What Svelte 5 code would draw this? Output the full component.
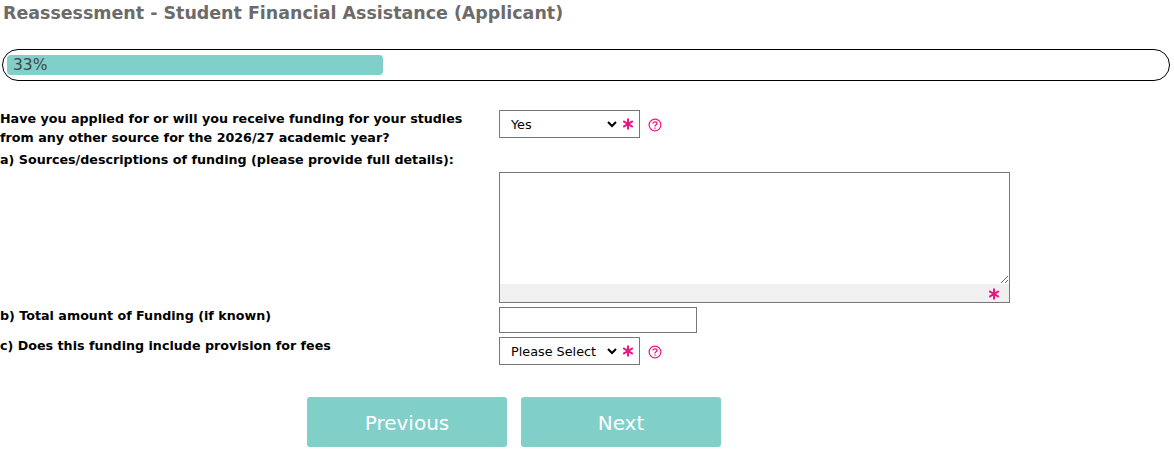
<script>
  let funding = $state('Yes');
  let fees = $state('Please Select');
</script>

<main class="page">
  <h1>Reassessment - Student Financial Assistance (Applicant)</h1>

  <div class="progress"><div class="fill" style="width: 376px">33%</div></div>

  <form class="form">
    <div class="row row-1">
      <div class="label">Have you applied for or will you receive funding for your studies<br />from any other source for the 2026/27 academic year?</div>
      <div class="field">
        <div class="selectbox">
          <select bind:value={funding}><option>Yes</option><option>No</option></select>
          <span class="req">
            <svg viewBox="0 0 12 12" width="12" height="12"><path d="M6 0.5V11.5M1.2 3.2L10.8 8.8M10.8 3.2L1.2 8.8" /></svg>
          </span>
        </div>
        <svg class="help" viewBox="0 0 14 14" width="14" height="14"><circle cx="7" cy="7" r="5.9" /><path d="M5 5.6C5 4.4 5.9 3.8 7 3.8S9 4.5 9 5.5C9 6.8 7 6.9 7 8.4" /><path d="M7 9.6V10.8" /></svg>
      </div>
    </div>

    <div class="label row-a">a) Sources/descriptions of funding (please provide full details):</div>

    <div class="row row-ta">
      <div class="label"></div>
      <div class="areabox">
        <textarea></textarea>
        <div class="areafoot">
          <svg viewBox="0 0 12 12" width="12" height="12"><path d="M6 0.5V11.5M1.2 3.2L10.8 8.8M10.8 3.2L1.2 8.8" /></svg>
        </div>
      </div>
    </div>

    <div class="row row-b">
      <div class="label">b) Total amount of Funding (if known)</div>
      <input type="text" />
    </div>

    <div class="row row-c">
      <div class="label">c) Does this funding include provision for fees</div>
      <div class="field">
        <div class="selectbox">
          <select bind:value={fees}><option>Please Select</option><option>Yes</option><option>No</option></select>
          <span class="req">
            <svg viewBox="0 0 12 12" width="12" height="12"><path d="M6 0.5V11.5M1.2 3.2L10.8 8.8M10.8 3.2L1.2 8.8" /></svg>
          </span>
        </div>
        <svg class="help" viewBox="0 0 14 14" width="14" height="14"><circle cx="7" cy="7" r="5.9" /><path d="M5 5.6C5 4.4 5.9 3.8 7 3.8S9 4.5 9 5.5C9 6.8 7 6.9 7 8.4" /><path d="M7 9.6V10.8" /></svg>
      </div>
    </div>

    <div class="actions">
      <button type="button">Previous</button>
      <button type="button">Next</button>
    </div>
  </form>
</main>

<style>
  :global(body) { margin: 0; background: #fff; }
  .page { font-family: "DejaVu Sans", Verdana, sans-serif; width: 1174px; height: 451px; overflow: hidden; }
  h1 { margin: 0; padding: 3px 0 0 3px; font-size: 17.45px; line-height: 21px; font-weight: 700; color: #6b6b6b; }
  .progress { box-sizing: border-box; margin: 25px 4px 0 2px; height: 32px; border: 1px solid #000; border-radius: 16px; padding: 5px 0 0 4px; }
  .fill { box-sizing: border-box; height: 20px; background: #80d0c9; border-radius: 4px; padding-left: 6px; font-size: 15.5px; line-height: 20px; color: #444; }
  .form { margin-top: 29px; }
  .row { display: flex; }
  .label { width: 499px; flex: none; font-size: 12.7px; font-weight: 700; line-height: 19px; color: #000; }
  .row .label { margin-top: -1px; }
  .row-a { width: auto; margin-top: 0; }
  .row-ta { margin-top: 3px; }
  .row-b { margin-top: 4px; height: 26px; }
  .row-c { margin-top: 4px; }
  .row-1 { height: 40px; }
  .field { display: flex; align-items: flex-start; gap: 8px; }
  .selectbox { box-sizing: border-box; width: 141px; height: 28px; border: 1px solid #777; display: flex; align-items: center; padding-left: 7px; }
  select { width: 113px; border: 0; background: #fff; font-family: inherit; font-size: 12.8px; color: #000; padding: 0; outline: none; height: 24px; }
  .req { display: flex; margin-left: 2px; }
  svg path { stroke: #ec1682; stroke-width: 2; fill: none; }
  .help { margin-top: 8px; }
  .help circle { fill: none; stroke: #ec1682; stroke-width: 1.2; }
  .help path { stroke-width: 1.3; }
  .areabox { box-sizing: border-box; width: 511px; height: 131px; border: 1px solid #777; display: flex; flex-direction: column; }
  textarea { flex: 1; display: block; border: 0; outline: none; margin: 0; padding: 2px; min-height: 0; background: #fff; }
  .areafoot { flex: none; height: 18px; box-sizing: border-box; padding: 2px 9px 0 0; background: #f0f0f0; display: flex; justify-content: flex-end; align-items: center; }
  input { box-sizing: border-box; width: 198px; height: 26px; border: 1px solid #777; outline: none; padding: 0 4px; margin: 0; }
  .actions { display: flex; gap: 14px; margin-top: 32px; padding-left: 307px; }
  button { width: 200px; height: 50px; border: 0; border-radius: 3px; background: #80d0c9; color: #fff; font-family: inherit; font-size: 20px; padding: 1px 0 0; }
</style>
